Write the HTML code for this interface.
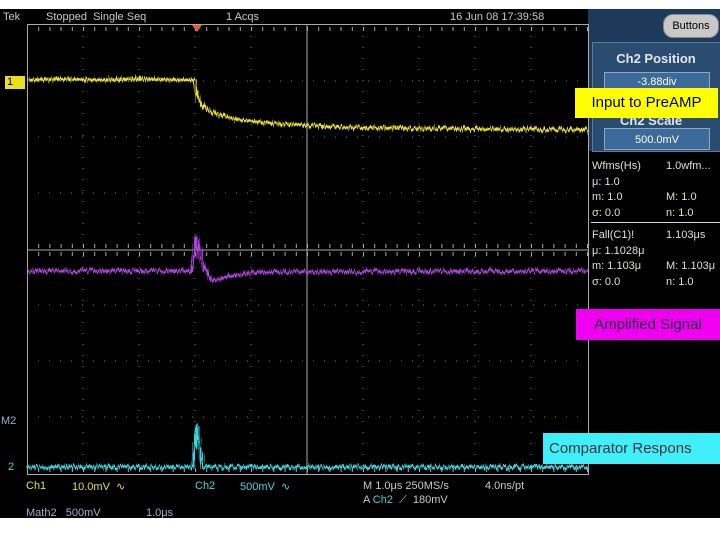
<!DOCTYPE html>
<html><head><style>
body{margin:0;width:720px;height:540px;background:#fff;position:relative;overflow:hidden;font-family:"Liberation Sans",sans-serif}
.a{position:absolute;white-space:nowrap}
.t{font-size:11px;color:#c8c8c8}
</style></head><body>
<div class="a" style="left:0;top:9px;width:720px;height:509px;background:#000"></div>
<div class="a" style="left:588px;top:9px;width:132px;height:142px;background:#1d3a5a"></div>
<div class="a" style="left:663px;top:14px;width:54px;height:22px;border-radius:10px;background:#c8c8c8;border:1px solid #888;font-size:11px;line-height:22px;text-align:center;color:#000">Buttons</div>
<div class="a" style="left:592px;top:42px;width:128px;height:108px;background:#2a4c70;border:1px solid #5a7aa0"></div>
<div class="a" style="left:592px;top:51px;width:128px;text-align:center;font-size:13px;font-weight:bold;color:#e0e8f0">Ch2 Position</div>
<div class="a" style="left:604px;top:72px;width:104px;height:18px;background:#3c6a9a;border:1px solid #8ab;font-size:11px;color:#fff;text-align:center;line-height:18px">-3.88div</div>
<div class="a" style="left:604px;top:128px;width:104px;height:20px;background:#3c6a9a;border:1px solid #8ab;font-size:11px;color:#fff;text-align:center;line-height:22px">500.0mV</div>
<div class="a" style="left:620px;top:113px;font-size:13px;font-weight:bold;color:#e0e8f0">Ch2 Scale</div>
<svg class="a" style="left:0;top:0" width="720" height="540">
<defs>
<filter id="n" x="-5%" y="-50%" width="110%" height="200%">
<feTurbulence type="fractalNoise" baseFrequency="0.9 0.05" numOctaves="2" seed="3"/>
<feDisplacementMap in="SourceGraphic" scale="9" xChannelSelector="R" yChannelSelector="G"/>
</filter>
</defs>
<g stroke="#777" stroke-width="1" stroke-dasharray="1 10" fill="none">
<path d="M83 25V474M139 25V474M195 25V474M251 25V474M363 25V474M419 25V474M475 25V474M531 25V474"/>
<path d="M27 81H588M27 137H588M27 193H588M27 305H588M27 361H588M27 417H588"/>
</g>
<g stroke="#aaa" fill="none">
<rect x="27.5" y="24.5" width="561" height="450"/>
<path d="M307 25V474M27 250H588"/>
</g>
<g stroke="#aaa" stroke-dasharray="1 10.2">
<path d="M27 29H588M27 470H588M27 246H588M27 254H588" stroke-width="4"/>
</g>
<path d="M192 25L197 32L202 25Z" fill="#e06030"/>
<g filter="url(#n)" fill="none" stroke-width="3">
<path d="M28 80 L60 79 L100 80 L140 79 L180 80 L195 80 L198 98 L205 108 L215 114 L240 120 L280 124 L340 127 L400 128 L480 129 L588 130" stroke="#e8e020"/>
<path d="M28 271 L100 271 L192 271 L196 236 L200 256 L205 270 L212 281 L230 276 L260 272 L588 271" stroke="#b040e0"/>
<path d="M28 467 L192 467 L195 450 L197 425 L200 450 L202 467 L588 467" stroke="#30d8e0"/>
</g>
</svg>
<div class="a" style="left:5px;top:76px;width:18px;height:13px;background:#e8e020;font-size:11px;line-height:13px;padding-left:2px">1</div>
<div class="a t" style="left:1px;top:415px;color:#a8a8d0">M2</div>
<div class="a t" style="left:8px;top:461px;color:#30d8e0">2</div>
<div class="a t" style="left:3px;top:11px">Tek</div>
<div class="a t" style="left:46px;top:11px">Stopped&nbsp; Single Seq</div>
<div class="a t" style="left:226px;top:11px">1 Acqs</div>
<div class="a t" style="left:450px;top:11px">16 Jun 08 17:39:58</div>
<div class="a t" style="left:592px;top:159px;line-height:15.5px;color:#e0e0c0">Wfms(Hs)<br>μ: 1.0<br>m: 1.0<br>σ: 0.0</div>
<div class="a t" style="left:666px;top:159px;line-height:15.5px;color:#e0e0c0">1.0wfm...<br><br>M: 1.0<br>n: 1.0</div>
<div class="a" style="left:591px;top:222px;width:129px;height:1px;background:#ddd"></div>
<div class="a t" style="left:592px;top:228px;line-height:15.5px;color:#e0e0c0">Fall(C1)!<br>μ: 1.1028μ<br>m: 1.103μ<br>σ: 0.0</div>
<div class="a t" style="left:666px;top:228px;line-height:15.5px;color:#e0e0c0">1.103μs<br><br>M: 1.103μ<br>n: 1.0</div>
<div class="a" style="left:575px;top:88px;width:143px;height:30px;background:#ffff00;font-size:15px;line-height:30px;text-align:center;color:#000">Input to PreAMP</div>
<div class="a" style="left:576px;top:309px;width:144px;height:31px;background:#ee00ee;font-size:15px;line-height:31px;text-align:center;color:#202040">Amplified Signal</div>
<div class="a" style="left:543px;top:433px;width:177px;height:31px;background:#40f0f8;font-size:15px;line-height:31px;padding-left:6px;color:#303040">Comparator Respons</div>
<div class="a t" style="left:26px;top:480px;color:#e0e040">Ch1</div>
<div class="a t" style="left:72px;top:480px;color:#e0e040">10.0mV &nbsp;∿</div>
<div class="a t" style="left:195px;top:480px;color:#40d8e0">Ch2</div>
<div class="a t" style="left:240px;top:480px;color:#40d8e0">500mV &nbsp;∿</div>
<div class="a t" style="left:363px;top:480px">M 1.0μs 250MS/s</div>
<div class="a t" style="left:485px;top:480px">4.0ns/pt</div>
<div class="a t" style="left:363px;top:494px">A <span style="color:#40d8e0">Ch2</span> &nbsp;⟋ &nbsp;180mV</div>
<div class="a t" style="left:26px;top:507px;color:#a8a8d0">Math2&nbsp;&nbsp; 500mV</div>
<div class="a t" style="left:146px;top:507px;color:#a8a8d0">1.0μs</div>
</body></html>
